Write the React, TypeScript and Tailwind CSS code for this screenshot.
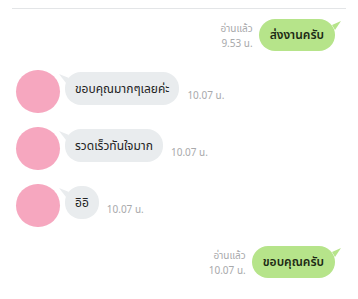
import React from 'react'

const font = { fontFamily: '"Noto Sans", "Noto Sans Thai", "DejaVu Sans", sans-serif' }

function SentTail() {
  return (
    <svg className="absolute right-[-7px] top-[2px]" width="10" height="10" viewBox="0 0 10 10">
      <path d="M0 4 L9 0 L3 9 Z" fill="#b6e48a" />
    </svg>
  )
}

function RecvTail() {
  return (
    <svg className="absolute left-[-6px] top-[2px]" width="10" height="10" viewBox="0 0 10 10">
      <path d="M10 4 L0 0 L7 9 Z" fill="#e9ecee" />
    </svg>
  )
}

function Sent({ text, time }: { text: string; time: string }) {
  return (
    <div className="flex justify-end items-end pr-[23px]">
      <div className="flex flex-col items-end text-[10px] leading-[15px] text-[#a8a9ab] mr-[6px]">
        <span>อ่านแล้ว</span>
        <span>{time}</span>
      </div>
      <div className="relative h-[32px] px-[11px] flex items-center rounded-[16px] bg-[#b6e48a] text-[12px] font-semibold text-[#1d2a14]">
        {text}
        <SentTail />
      </div>
    </div>
  )
}

function Received({ text, time }: { text: string; time: string }) {
  return (
    <div className="flex items-start pl-[16px]">
      <div className="w-[44px] h-[43px] rounded-full bg-[#f6a7bf] shrink-0" />
      <div className="flex items-end ml-[5px] mt-[2px]">
        <div className="relative h-[33px] px-[10px] flex items-center rounded-[16px] bg-[#e9ecee] text-[12px] text-[#222]">
          {text}
          <RecvTail />
        </div>
        <span className="text-[10px] leading-[14px] text-[#a8a9ab] ml-[8px] mb-[3px]">{time}</span>
      </div>
    </div>
  )
}

export default function App() {
  return (
    <div className="w-[358px] h-[299px] bg-white overflow-hidden" style={font}>
      <div className="mx-[12px] mt-[8px] border-t border-[#e3e5e7]" />
      <div className="mt-[10px]">
        <Sent text="ส่งงานครับ" time="9.53 น." />
      </div>
      <div className="mt-[19px]">
        <Received text="ขอบคุณมากๆเลยค่ะ" time="10.07 น." />
      </div>
      <div className="mt-[14px]">
        <Received text="รวดเร็วทันใจมาก" time="10.07 น." />
      </div>
      <div className="mt-[14px]">
        <Received text="อิอิ" time="10.07 น." />
      </div>
      <div className="mt-[19px]">
        <Sent text="ขอบคุณครับ" time="10.07 น." />
      </div>
    </div>
  )
}
